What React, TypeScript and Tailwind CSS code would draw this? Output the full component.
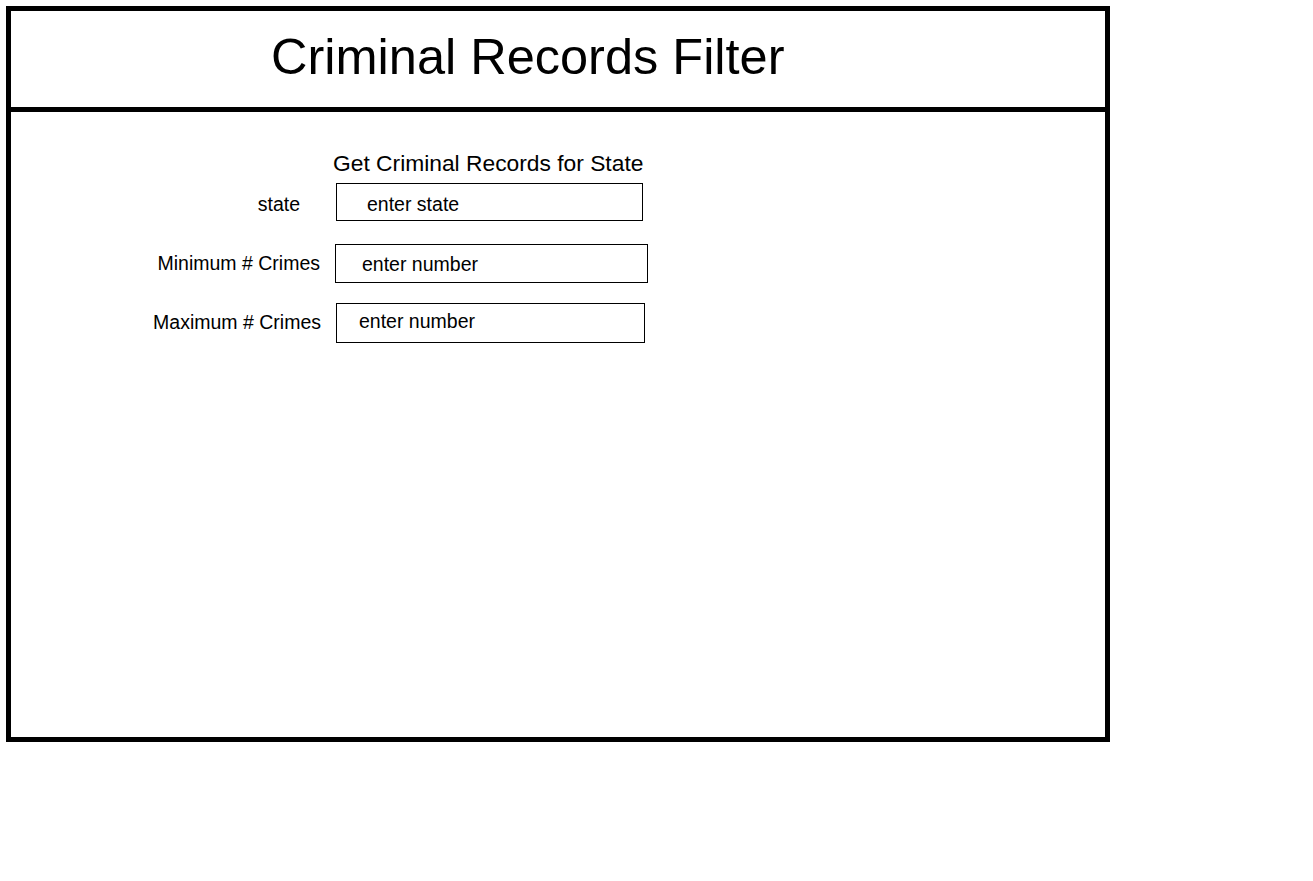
export default function App() {
  return (
    <div className="min-h-screen bg-white pl-[6px] pt-[6px] text-black" style={{ fontFamily: '"Liberation Sans", Arial, sans-serif' }}>
      <div className="flex h-[736px] w-[1104px] flex-col border-[5px] border-black">
        <header className="h-[96px] shrink-0 pl-[260px] pt-[21px]">
          <h1 className="text-[50.5px] leading-none">Criminal Records Filter</h1>
        </header>
        <div className="h-[5px] shrink-0 bg-black" />
        <main className="flex-1">
          <p className="ml-[322px] mt-[40px] text-[22.8px] leading-none">Get Criminal Records for State</p>

          <div className="mt-[8px] flex items-start">
            <span className="mt-[12px] w-[289px] text-right text-[19.5px] leading-none">state</span>
            <div className="ml-[36px] h-[38px] w-[307px] border border-black pl-[30px] pt-[11px] text-[19.5px] leading-none">
              enter state
            </div>
          </div>

          <div className="mt-[23px] flex items-start">
            <span className="mt-[10px] w-[309px] text-right text-[19.5px] leading-none">Minimum # Crimes</span>
            <div className="ml-[15px] h-[39px] w-[313px] border border-black pl-[26px] pt-[10px] text-[19.5px] leading-none">
              enter number
            </div>
          </div>

          <div className="mt-[20px] flex items-start">
            <span className="mt-[10px] w-[310px] text-right text-[19.5px] leading-none">Maximum # Crimes</span>
            <div className="ml-[15px] h-[40px] w-[309px] border border-black pl-[22px] pt-[8px] text-[19.5px] leading-none">
              enter number
            </div>
          </div>
        </main>
      </div>
    </div>
  );
}
